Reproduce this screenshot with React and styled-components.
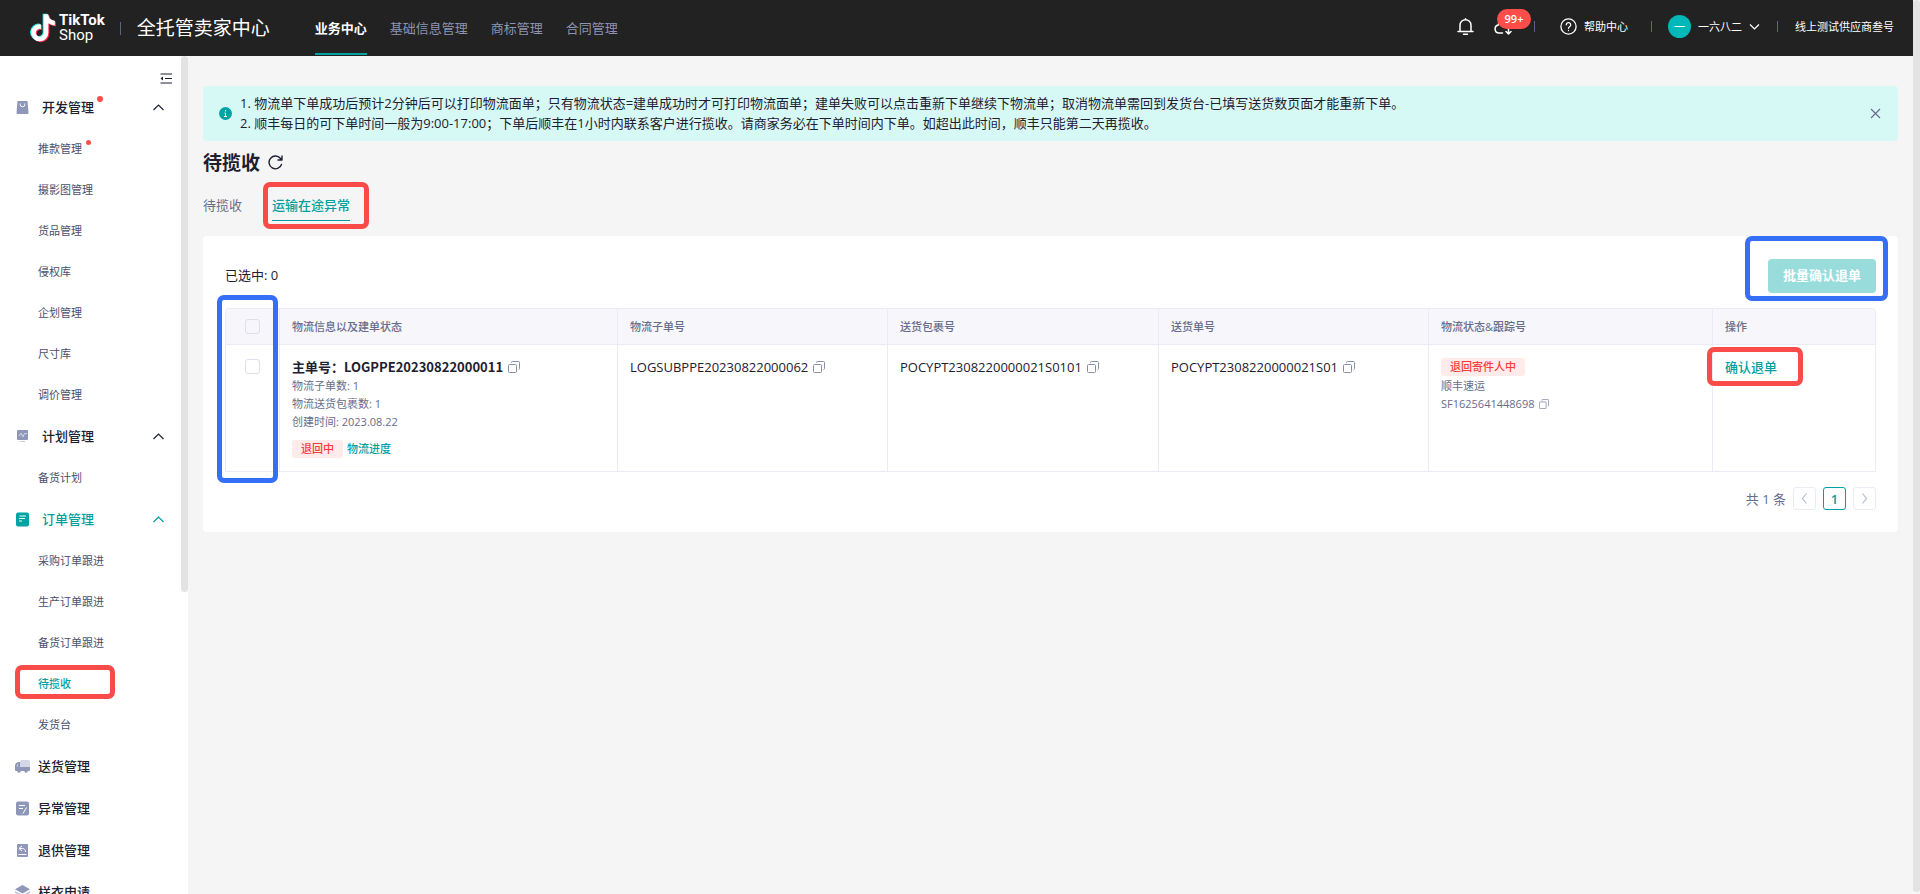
import React, { useState } from 'react';
import styled, { createGlobalStyle } from 'styled-components';

const GlobalStyle = createGlobalStyle`
  * {
    box-sizing: border-box;
  }

  body {
    margin: 0;
    background: #f5f5f5;
    color: #1e2030;
    font-family: 'Open Sans', 'Noto Sans CJK SC', sans-serif;
    font-size: 13px;
    line-height: 20px;
  }

  button,
  input {
    font: inherit;
    color: inherit;
  }

  button {
    padding: 0;
    border: none;
    background: transparent;
    cursor: pointer;
  }

  a {
    color: inherit;
    text-decoration: none;
  }

  svg {
    display: block;
    flex: none;
  }
`;

const Shell = styled.div`
  display: flex;
  height: 100vh;
  overflow: hidden;
`;

const Page = styled.div`
  display: flex;
  flex: 1;
  flex-direction: column;
  min-width: 0;
`;

const PageScroll = styled.div`
  width: 7px;
  margin-bottom: 2px;
  border-radius: 4px;
  background: #e3e3e3;
`;

const Header = styled.header`
  display: flex;
  align-items: center;
  height: 56px;
  flex: none;
  padding: 0 19px 0 30px;
  background: #222;
  color: #fff;
`;

const Brand = styled.a`
  display: flex;
  align-items: center;
  gap: 3px;
  margin-right: 15px;
`;

const BrandName = styled.span`
  display: flex;
  flex-direction: column;
  font-family: Roboto, sans-serif;
  font-size: 15px;
  line-height: 15px;

  b {
    font-weight: 700;
  }
`;

const Divider = styled.i`
  width: 1px;
  height: ${props => props.$height || 11}px;
  background: #5d6382;
`;

const SiteName = styled.span`
  margin: 0 45px 0 16px;
  font-size: 19px;
`;

const TopNav = styled.nav`
  display: flex;
  gap: 23px;
  height: 100%;
`;

const TopLink = styled.a`
  display: flex;
  align-items: center;
  height: 55px;
  padding-top: 2px;
  border-bottom: 2px solid ${props => (props.$active ? '#00a3a3' : 'transparent')};
  color: ${props => (props.$active ? '#fff' : '#8d93b3')};
  font-weight: ${props => (props.$active ? 700 : 400)};
`;

const HeaderTools = styled.div`
  display: flex;
  align-items: center;
  margin-left: auto;
  padding-bottom: 3px;
  font-size: 11px;
`;

const Tool = styled.button`
  position: relative;
  display: flex;
  align-items: center;
  gap: 7px;
  margin: 0 ${props => props.$right || 0}px 0 ${props => props.$left || 0}px;
`;

const CountBadge = styled.span`
  position: absolute;
  left: 3px;
  top: -10px;
  width: 34px;
  border-radius: 10px;
  background: #ff4d4a;
  font-weight: 600;
  text-align: center;
`;

const Avatar = styled.span`
  width: 23px;
  height: 23px;
  border-radius: 50%;
  background: #00b8b9;
  line-height: 23px;
  text-align: center;
`;

const Body = styled.div`
  display: flex;
  flex: 1;
  min-height: 0;
`;

const Sidebar = styled.aside`
  display: flex;
  width: 188px;
  flex: none;
  overflow: hidden;
  background: #fff;
`;

const Menu = styled.nav`
  flex: 1;
  padding-top: 15px;
`;

const SideScroll = styled.div`
  width: 7px;
  height: 64%;
  border-radius: 4px;
  background: #e3e3e3;
`;

const CollapseButton = styled.button`
  display: block;
  margin: 0 9px 0 auto;
  height: 15px;
`;

const GroupTitle = styled.button`
  display: flex;
  align-items: center;
  width: 100%;
  height: 42px;
  padding: 0 17px 0 15px;
  color: ${props => (props.$active ? '#009fa0' : '#1e2030')};
  font-weight: 500;
`;

const GroupText = styled.span`
  position: relative;
  margin: 0 auto 0 ${props => (props.$nested ? 12 : 8)}px;
`;

const MenuLink = styled.a`
  display: flex;
  align-items: center;
  height: 41px;
  padding-left: 38px;
  color: ${props => (props.$active ? '#009fa0' : '#4a4f6c')};
  font-size: 11px;
  font-weight: ${props => (props.$active ? 500 : 400)};

  span {
    position: relative;
  }
`;

const Dot = styled.i`
  position: absolute;
  top: ${props => (props.$size > 5 ? -1 : 1)}px;
  right: -9px;
  width: ${props => props.$size}px;
  height: ${props => props.$size}px;
  border-radius: 50%;
  background: #ff4d4a;
`;

/* highlight frame laid over the part it points at */
const Mark = styled.i`
  position: absolute;
  inset: ${props => props.$inset};
  width: ${props => props.$width || 'auto'};
  border: 5px solid ${props => (props.$blue ? '#346ff6' : '#f94b47')};
  border-radius: 7px;
  pointer-events: none;
`;

const Main = styled.main`
  flex: 1;
  min-width: 0;
  padding: 30px 15px;
`;

const Notice = styled.section`
  display: flex;
  align-items: center;
  padding: 7px 17px 8px 16px;
  border-radius: 4px;
  background: #d7f9f6;
`;

const NoticeText = styled.ol`
  flex: 1;
  margin: 0;
  padding: 0 0 0 8px;
  list-style: none;
`;

const TitleRow = styled.div`
  display: flex;
  align-items: center;
  gap: 8px;
  height: 43px;

  h1 {
    margin: 0;
    font-size: 19px;
    font-weight: 700;
  }
`;

const Tabs = styled.div`
  display: flex;
  gap: 30px;
  height: 52px;
  padding-top: 11px;
`;

const Tab = styled.button`
  position: relative;
  height: 26px;
  padding-bottom: 5px;
  border-bottom: 1px solid ${props => (props.$active ? '#009fa0' : 'transparent')};
  color: ${props => (props.$active ? '#009fa0' : '#686d8c')};
  font-weight: ${props => (props.$active ? 500 : 400)};
`;

const Card = styled.section`
  padding: 23px 22px 22px;
  border-radius: 4px;
  background: #fff;
`;

const CardHead = styled.div`
  display: flex;
  align-items: center;
  justify-content: space-between;
  margin-bottom: 15px;
`;

const SelectedCount = styled.span`
  padding-bottom: 2px;
`;

const BatchArea = styled.div`
  position: relative;
`;

const BatchButton = styled.button`
  height: 34px;
  padding: 0 15px 2px;
  border-radius: 4px;
  background: #98dcdb;
  color: #fff;
  font-weight: 700;
`;

const TableWrap = styled.div`
  position: relative;
`;

const Table = styled.table`
  width: 100%;
  table-layout: fixed;
  border-collapse: separate;
  border-spacing: 0;
  border: 1px solid #eaebf5;
  border-bottom: none;
  border-radius: 4px 4px 0 0;

  th,
  td {
    padding: 12px;
    border-right: 1px solid #eaebf5;
    border-bottom: 1px solid #eaebf5;
    text-align: left;
    vertical-align: top;
  }

  th {
    height: 36px;
    padding: 0 12px;
    background: #f6f6fb;
    color: #686d8c;
    font-size: 11px;
    font-weight: 500;
    vertical-align: middle;
  }

  td {
    height: 127px;
  }

  th:last-child,
  td:last-child {
    border-right: none;
  }

  th:first-child,
  td:first-child {
    padding-left: 19px;
  }
`;

const Checkbox = styled.input.attrs({ type: 'checkbox' })`
  display: block;
  appearance: none;
  width: 15px;
  height: 15px;
  margin: ${props => (props.$row ? 2 : 0)}px 0 0;
  border: 1px solid #dcdff0;
  border-radius: 3px;
  background: ${props => (props.$row ? '#fff' : 'transparent')};
`;

const CodeLine = styled.div`
  display: flex;
  align-items: center;
  gap: 5px;
`;

const MainCode = styled(CodeLine)`
  font-family: 'Noto Sans CJK SC', sans-serif;
  font-weight: 700;
`;

const Meta = styled.div`
  display: flex;
  align-items: center;
  gap: 5px;
  height: 18px;
  color: #686d8c;
  font-size: 11px;
`;

const StatusRow = styled.div`
  display: flex;
  align-items: center;
  gap: 4px;
  height: 20px;
  margin-top: ${props => props.$top || 0}px;
  font-size: 11px;
  font-weight: 500;
`;

const Tag = styled.span`
  padding: 0 9px;
  border-radius: 3px;
  background: #ffebe9;
  color: #fb3b3b;
  line-height: 18px;
`;

const ActionLink = styled.a`
  position: relative;
  color: #009fa0;
  font-weight: 500;
`;

const Pager = styled.nav`
  display: flex;
  align-items: center;
  justify-content: flex-end;
  gap: 7px;
  margin-top: 15px;
  color: #686d8c;
`;

const PageButton = styled.button`
  display: flex;
  align-items: center;
  justify-content: center;
  width: 23px;
  height: 23px;
  border: 1px solid ${props => (props.$active ? '#009fa0' : '#eaebf5')};
  border-radius: 3px;
  color: ${props => (props.$active ? '#009fa0' : '#b8bccf')};
  font-weight: 600;
`;

const notePath =
  'M448 209.9a210 210 0 0 1-122.8-39.2v178.7A162.6 162.6 0 1 1 185 188.3v89.9a74.6 74.6 0 1 0 52.2 71.2V0h88a121 121 0 0 0 1.9 22.2A122 122 0 0 0 381 102.4a121 121 0 0 0 67 20.1z';

const NoteLogo = () => (
  <svg width="26" height="30" viewBox="-22 -14 492 546">
    <path d={notePath} fill="#25f4ee" transform="translate(-20 -12)" />
    <path d={notePath} fill="#fe2c55" transform="translate(20 16)" />
    <path d={notePath} fill="#fff" />
  </svg>
);

const Stroke = ({ w = 16, h = w, width = 1, children }) => (
  <svg
    width={w}
    height={h}
    viewBox={`0 0 ${w} ${h}`}
    fill="none"
    stroke="currentColor"
    strokeWidth={width}
    strokeLinecap="round"
    strokeLinejoin="round"
    aria-hidden="true"
  >
    {children}
  </svg>
);

const BellIcon = () => (
  <Stroke w={17} width={1.5}>
    <path d="M1 13.5h15M3 13.5V7.2a5.5 5.5 0 0 1 11 0v6.3M6.5 16.2h4M8.5 0.8v1" />
  </Stroke>
);

const CloudIcon = () => (
  <Stroke w={18} h={16} width={1.5}>
    <path d="M8.5 14H5a4 4 0 0 1-.8-7.9A5 5 0 0 1 13.8 5M14.5 7v8M12 12.5l2.5 2.5 2.5-2.5" />
  </Stroke>
);

const HelpIcon = () => (
  <Stroke w={17} width={1.3}>
    <circle cx="8.5" cy="8.5" r="7.6" />
    <path d="M6.3 6.8a2.2 2.2 0 1 1 3.3 1.9c-.8.5-1.1.8-1.1 1.6M8.5 12.4v.2" />
  </Stroke>
);

const Chevron = ({ d, size = 11, color }) => (
  <svg width={size} height={size} viewBox="0 0 11 11" fill="none" stroke={color || 'currentColor'} strokeWidth="1.2" aria-hidden="true">
    <path d={d} />
  </svg>
);

const up = 'M0.5 8L5.5 3L10.5 8';
const down = 'M1 3.5L5.5 8L10 3.5';
const left = 'M7.5 0.5L3.5 5.5L7.5 10.5';
const right = 'M3.5 0.5L7.5 5.5L3.5 10.5';
const cross = 'M1 1L10 10M10 1L1 10';

const CopyIcon = ({ small }) => (
  <svg width={small ? 10 : 12} height={small ? 10 : 12} viewBox="0 0 12 12" fill="none" stroke="#8a8fa8" aria-hidden="true">
    <rect x="0.5" y="3.5" width="8" height="8" rx="1" />
    <path d="M3.5 2V1.5a1 1 0 0 1 1-1h6a1 1 0 0 1 1 1v6a1 1 0 0 1-1 1" />
  </svg>
);

const menuIcons = {
  dev: (
    <>
      <path d="M2.5 1h10l1 12a1 1 0 0 1-1 1h-10a1 1 0 0 1-1-1z" fill="#8f97b8" />
      <path d="M5.2 3.5v1a2.3 2.3 0 0 0 4.6 0v-1" stroke="#fff" fill="none" />
    </>
  ),
  plan: (
    <>
      <rect x="2" y="1" width="11" height="10" rx="1" fill="#8f97b8" />
      <path d="M4 7l2-3 2 4 1.5-3.5H12" stroke="#d3d7e6" fill="none" />
      <path d="M5 12.5h5" stroke="#c7cbe0" />
    </>
  ),
  order: (
    <>
      <rect x="1" y="0.5" width="13" height="14" rx="2" fill="#00a3a3" />
      <path d="M4.5 4h6.5M4 6.5h6M4 9h3" stroke="#e6ffff" />
    </>
  ),
  truck: (
    <>
      <rect x="5" y="1" width="10" height="8" rx="1.5" fill="#d3d7e6" />
      <path d="M3.5 3H5v5h10v3a1 1 0 0 1-1 1H1a1 1 0 0 1-1-1V7a4 4 0 0 1 3.5-4z" fill="#8f97b8" />
      <path d="M1.5 7.5L3 4.5V7.5z" fill="#d3d7e6" />
      <circle cx="4" cy="12" r="1.8" fill="#8f97b8" />
      <circle cx="11" cy="12" r="1.8" fill="#8f97b8" />
    </>
  ),
  issue: (
    <>
      <rect x="1" y="0.5" width="13" height="14" rx="2" fill="#8f97b8" />
      <path d="M4 4.5h6M4 7.5h4M11.5 6.5L8 12.5" stroke="#fff" fill="none" />
    </>
  ),
  back: (
    <>
      <rect x="2" y="1" width="11" height="13" rx="1" fill="#8f97b8" />
      <path d="M7 3L4 5.5L7 8M4.5 5.5h3a3 3 0 0 1 3 3.5M3.5 11.5h8" stroke="#fff" fill="none" />
    </>
  ),
  sample: (
    <>
      <path d="M0 9l7.5 4L15 9v2l-7.5 4L0 11z" fill="#dfe2ee" />
      <path d="M0 6l7.5 4L15 6v2l-7.5 4L0 8z" fill="#c3c8dc" />
      <path d="M7.5 0L15 4.2L7.5 8.4L0 4.2z" fill="#8f97b8" />
    </>
  ),
};

const topLinks = ['业务中心', '基础信息管理', '商标管理', '合同管理'];

const menu = [
  {
    icon: 'dev',
    title: '开发管理',
    dot: true,
    items: ['推款管理', '摄影图管理', '货品管理', '侵权库', '企划管理', '尺寸库', '调价管理'],
  },
  { icon: 'plan', title: '计划管理', items: ['备货计划'] },
  {
    icon: 'order',
    title: '订单管理',
    active: true,
    items: ['采购订单跟进', '生产订单跟进', '备货订单跟进', '待揽收', '发货台'],
  },
  { icon: 'truck', title: '送货管理' },
  { icon: 'issue', title: '异常管理' },
  { icon: 'back', title: '退供管理' },
  { icon: 'sample', title: '样衣申请' },
];

const columnWidths = [54, 338, 270, 271, 270, 284, 162];
const columns = ['物流信息以及建单状态', '物流子单号', '送货包裹号', '送货单号', '物流状态&跟踪号', '操作'];

const MenuGroup = ({ group }) => {
  const [open, setOpen] = useState(true);

  return (
    <div>
      <GroupTitle $active={group.active} onClick={() => setOpen(!open)}>
        <svg width="15" height="15" viewBox="0 0 15 15" aria-hidden="true">
          {menuIcons[group.icon]}
        </svg>
        <GroupText $nested={!!group.items}>
          {group.title}
          {group.dot && <Dot $size={6} />}
        </GroupText>
        {group.items && <Chevron d={open ? up : down} />}
      </GroupTitle>
      {open && group.items && group.items.map(item => (
        <MenuLink key={item} href="#" $active={item === '待揽收'}>
          <span>
            {item}
            {item === '推款管理' && <Dot $size={5} />}
            {item === '待揽收' && <Mark $inset="-9px auto -5px -23px" $width="100px" />}
          </span>
        </MenuLink>
      ))}
    </div>
  );
};

const CopyButton = ({ small }) => (
  <button aria-label="复制"><CopyIcon small={small} /></button>
);

const App = () => {
  const [tab, setTab] = useState(1);
  const [notice, setNotice] = useState(true);
  const [checked, setChecked] = useState(false);

  const toggle = () => setChecked(!checked);

  return (
    <Shell>
      <GlobalStyle />
      <Page>
        <Header>
          <Brand href="#">
            <NoteLogo />
            <BrandName><b>TikTok</b><span>Shop</span></BrandName>
          </Brand>
          <Divider $height={13} />
          <SiteName>全托管卖家中心</SiteName>
          <TopNav>
            {topLinks.map((text, i) => (
              <TopLink key={text} href="#" $active={i === 0}>{text}</TopLink>
            ))}
          </TopNav>
          <HeaderTools>
            <Tool $right={20} aria-label="通知"><BellIcon /></Tool>
            <Tool $right={22} aria-label="下载"><CloudIcon /><CountBadge>99+</CountBadge></Tool>
            <Divider />
            <Tool $left={25} $right={23}><HelpIcon />帮助中心</Tool>
            <Divider />
            <Tool $left={16} $right={17}>
              <Avatar>一</Avatar>
              一六八二
              <Chevron d={down} />
            </Tool>
            <Divider />
            <Tool $left={17}>线上测试供应商叁号</Tool>
          </HeaderTools>
        </Header>
        <Body>
          <Sidebar>
            <Menu>
              <CollapseButton aria-label="收起菜单">
                <svg width="12" height="11" viewBox="0 0 12 11" stroke="#1e2030" aria-hidden="true">
                  <path d="M0.5 1H12M5 5.5h7M0.5 10H12" />
                  <path d="M0.5 5.5l2.5-2v4z" fill="#1e2030" stroke="none" />
                </svg>
              </CollapseButton>
              {menu.map(group => <MenuGroup key={group.title} group={group} />)}
            </Menu>
            <SideScroll />
          </Sidebar>
          <Main>
            {notice && (
              <Notice>
                <svg width="13" height="13" viewBox="0 0 13 13" aria-hidden="true">
                  <circle cx="6.5" cy="6.5" r="6.5" fill="#00a3a3" />
                  <path d="M6.5 3v1.5M5.5 6h1v3.5M5 9.5h3" stroke="#fff" fill="none" />
                </svg>
                <NoticeText>
                  <li>1. 物流单下单成功后预计2分钟后可以打印物流面单；只有物流状态=建单成功时才可打印物流面单；建单失败可以点击重新下单继续下物流单；取消物流单需回到发货台-已填写送货数页面才能重新下单。</li>
                  <li>2. 顺丰每日的可下单时间一般为9:00-17:00；下单后顺丰在1小时内联系客户进行揽收。请商家务必在下单时间内下单。如超出此时间，顺丰只能第二天再揽收。</li>
                </NoticeText>
                <button aria-label="关闭" onClick={() => setNotice(false)}>
                  <Chevron d={cross} color="#686d8c" />
                </button>
              </Notice>
            )}
            <TitleRow>
              <h1>待揽收</h1>
              <button aria-label="刷新">
                <Stroke w={15} width={1.4}>
                  <path d="M13.5 9.5a6.4 6.4 0 1 1-1-6l1 1.3M14 1v4h-4" />
                </Stroke>
              </button>
            </TitleRow>
            <Tabs>
              {['待揽收', '运输在途异常'].map((text, i) => (
                <Tab key={text} $active={tab === i} onClick={() => setTab(i)}>
                  {text}
                  {i === 1 && <Mark $inset="-13px -19px -9px -9px" />}
                </Tab>
              ))}
            </Tabs>
            <Card>
              <CardHead>
                <SelectedCount>已选中: {checked ? 1 : 0}</SelectedCount>
                <BatchArea>
                  <BatchButton>批量确认退单</BatchButton>
                  <Mark $blue $inset="-23px -12px -8px -23px" />
                </BatchArea>
              </CardHead>
              <TableWrap>
                <Table>
                  <colgroup>
                    {columnWidths.map((width, i) => <col key={i} width={width} />)}
                  </colgroup>
                  <thead>
                    <tr>
                      <th><Checkbox aria-label="全选" checked={checked} onChange={toggle} /></th>
                      {columns.map(name => <th key={name}>{name}</th>)}
                    </tr>
                  </thead>
                  <tbody>
                    <tr>
                      <td><Checkbox $row aria-label="选择主单" checked={checked} onChange={toggle} /></td>
                      <td>
                        <MainCode>主单号：LOGPPE20230822000011 <CopyButton /></MainCode>
                        <Meta>物流子单数: 1</Meta>
                        <Meta>物流送货包裹数: 1</Meta>
                        <Meta>创建时间: 2023.08.22</Meta>
                        <StatusRow $top={8}>
                          <Tag>退回中</Tag>
                          <ActionLink href="#">物流进度</ActionLink>
                        </StatusRow>
                      </td>
                      <td><CodeLine>LOGSUBPPE20230822000062 <CopyButton /></CodeLine></td>
                      <td><CodeLine>POCYPT2308220000021S0101 <CopyButton /></CodeLine></td>
                      <td><CodeLine>POCYPT2308220000021S01 <CopyButton /></CodeLine></td>
                      <td>
                        <StatusRow><Tag>退回寄件人中</Tag></StatusRow>
                        <Meta>顺丰速运</Meta>
                        <Meta>SF1625641448698 <CopyButton small /></Meta>
                      </td>
                      <td>
                        <ActionLink href="#">
                          确认退单
                          <Mark $inset="-11px -26px -10px -18px" />
                        </ActionLink>
                      </td>
                    </tr>
                  </tbody>
                </Table>
                <Mark $blue $inset="-13px auto -11px -8px" $width="61px" />
              </TableWrap>
              <Pager aria-label="分页">
                <span>共 1 条</span>
                <PageButton aria-label="上一页"><Chevron d={left} /></PageButton>
                <PageButton $active>1</PageButton>
                <PageButton aria-label="下一页"><Chevron d={right} /></PageButton>
              </Pager>
            </Card>
          </Main>
        </Body>
      </Page>
      <PageScroll />
    </Shell>
  );
};

export default App;
